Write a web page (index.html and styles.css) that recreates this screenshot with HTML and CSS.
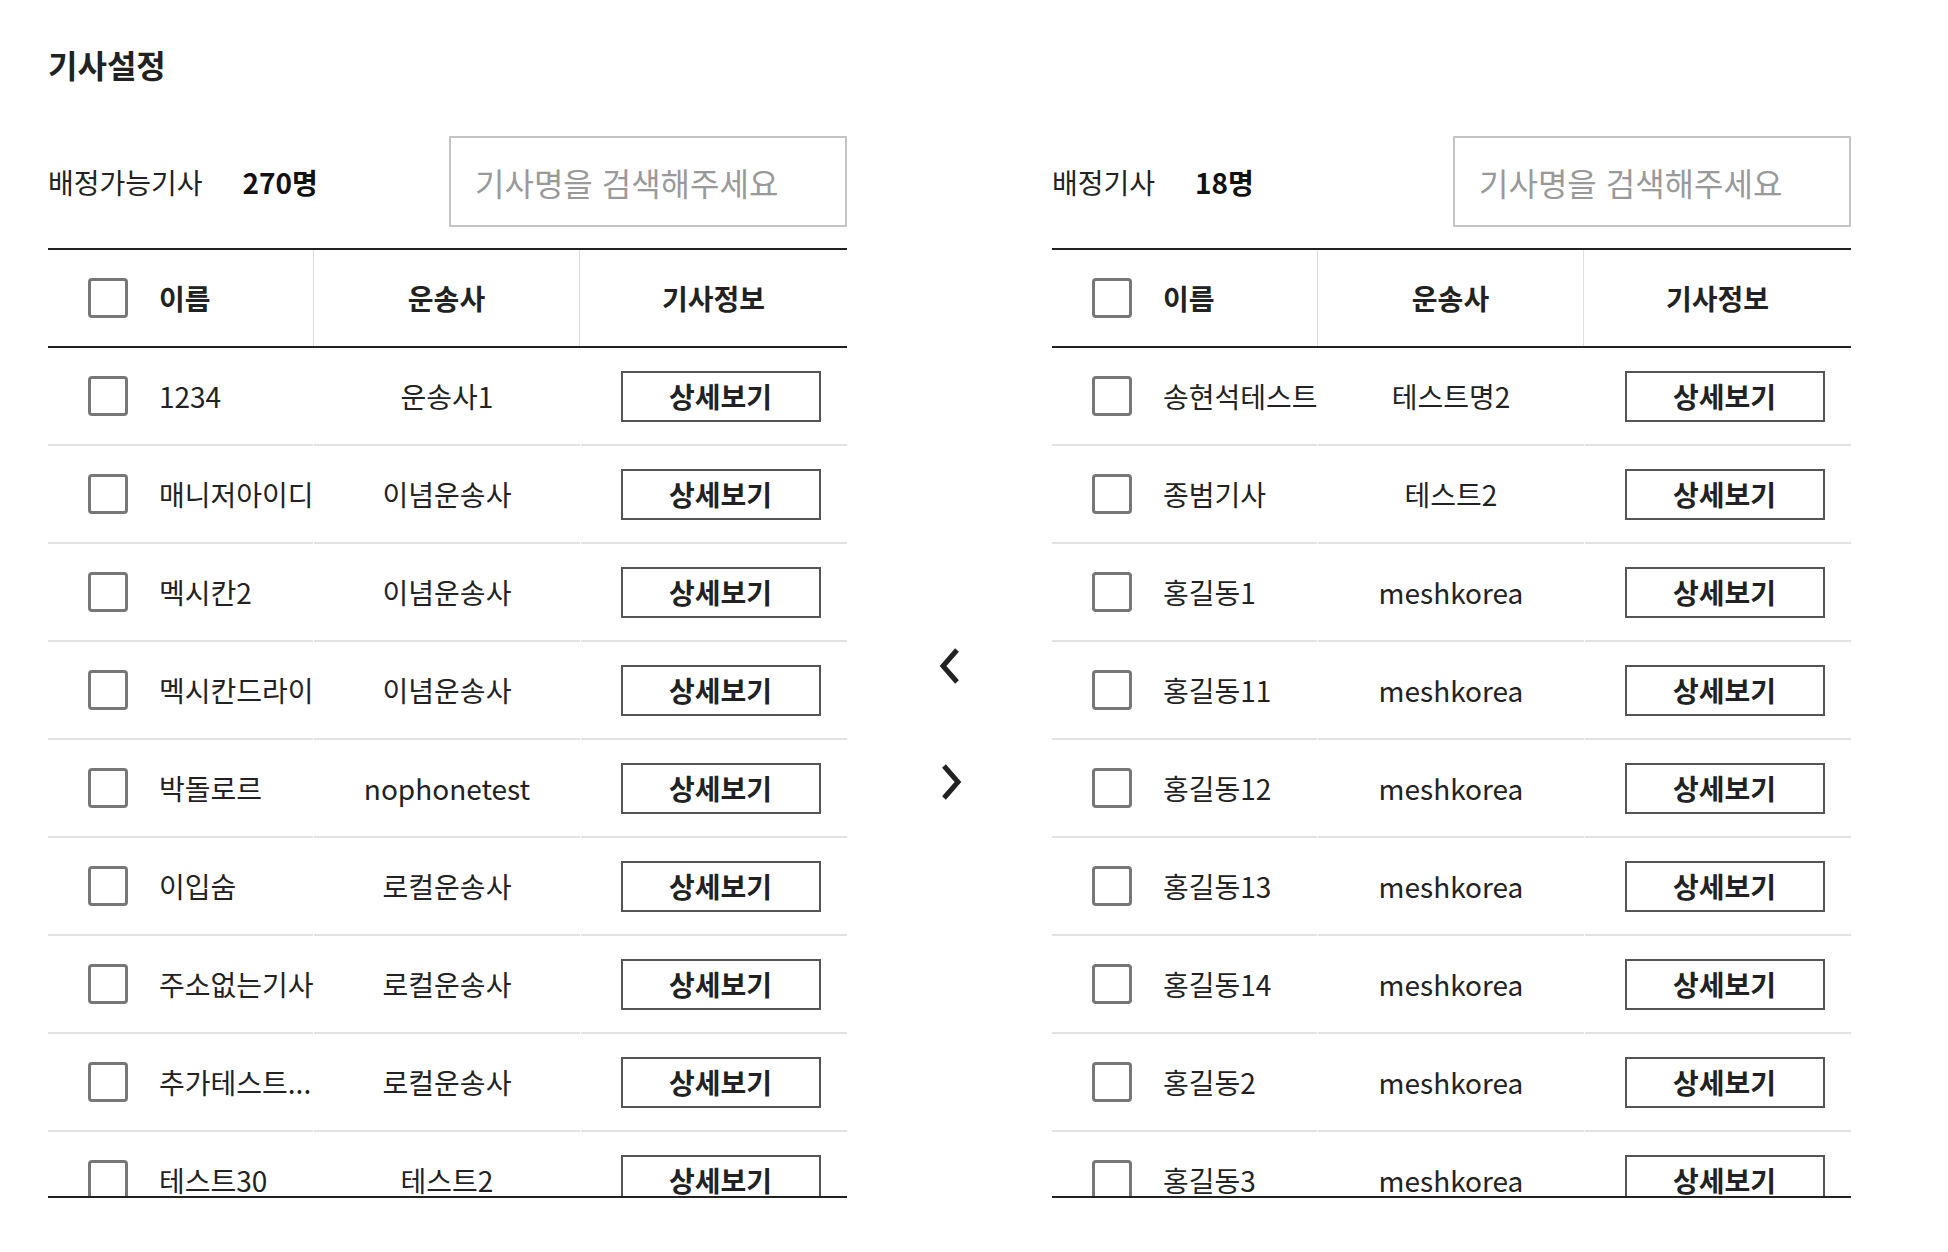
FILE: index.html
```html
<!DOCTYPE html>
<html lang="ko">

<head>
    <meta charset="UTF-8">
    <meta name="viewport" content="width=device-width, initial-scale=1.0">
    <title>기사설정</title>
    <link rel="stylesheet" href="styles.css">
</head>

<body>
    <div class="page">
        <h1 class="page-title">기사설정</h1>

        <div class="panels">
            <!-- 배정가능기사 -->
            <section class="panel">
                <div class="panel-head">
                    <span class="panel-label">배정가능기사</span>
                    <span class="panel-count">270명</span>
                    <input class="search" type="text" placeholder="기사명을 검색해주세요">
                </div>

                <div class="grid">
                    <div class="grid-head">
                        <div class="cell cell-name"><input type="checkbox" class="check"><span>이름</span></div>
                        <div class="cell cell-center">운송사</div>
                        <div class="cell cell-center">기사정보</div>
                    </div>
                    <div class="grid-body">
                        <div class="grid-row">
                            <div class="cell cell-name"><input type="checkbox" class="check"><span class="name">1234</span></div>
                            <div class="cell cell-center">운송사1</div>
                            <div class="cell cell-btn"><button class="btn-detail">상세보기</button></div>
                        </div>
                        <div class="grid-row">
                            <div class="cell cell-name"><input type="checkbox" class="check"><span class="name">매니저아이디</span></div>
                            <div class="cell cell-center">이념운송사</div>
                            <div class="cell cell-btn"><button class="btn-detail">상세보기</button></div>
                        </div>
                        <div class="grid-row">
                            <div class="cell cell-name"><input type="checkbox" class="check"><span class="name">멕시칸2</span></div>
                            <div class="cell cell-center">이념운송사</div>
                            <div class="cell cell-btn"><button class="btn-detail">상세보기</button></div>
                        </div>
                        <div class="grid-row">
                            <div class="cell cell-name"><input type="checkbox" class="check"><span class="name">멕시칸드라이</span></div>
                            <div class="cell cell-center">이념운송사</div>
                            <div class="cell cell-btn"><button class="btn-detail">상세보기</button></div>
                        </div>
                        <div class="grid-row">
                            <div class="cell cell-name"><input type="checkbox" class="check"><span class="name">박돌로르</span></div>
                            <div class="cell cell-center">nophonetest</div>
                            <div class="cell cell-btn"><button class="btn-detail">상세보기</button></div>
                        </div>
                        <div class="grid-row">
                            <div class="cell cell-name"><input type="checkbox" class="check"><span class="name">이입숨</span></div>
                            <div class="cell cell-center">로컬운송사</div>
                            <div class="cell cell-btn"><button class="btn-detail">상세보기</button></div>
                        </div>
                        <div class="grid-row">
                            <div class="cell cell-name"><input type="checkbox" class="check"><span class="name">주소없는기사</span></div>
                            <div class="cell cell-center">로컬운송사</div>
                            <div class="cell cell-btn"><button class="btn-detail">상세보기</button></div>
                        </div>
                        <div class="grid-row">
                            <div class="cell cell-name"><input type="checkbox" class="check"><span class="name">추가테스트...</span></div>
                            <div class="cell cell-center">로컬운송사</div>
                            <div class="cell cell-btn"><button class="btn-detail">상세보기</button></div>
                        </div>
                        <div class="grid-row">
                            <div class="cell cell-name"><input type="checkbox" class="check"><span class="name">테스트30</span></div>
                            <div class="cell cell-center">테스트2</div>
                            <div class="cell cell-btn"><button class="btn-detail">상세보기</button></div>
                        </div>
                        <div class="grid-row">
                            <div class="cell cell-name"><input type="checkbox" class="check"><span class="name">테스트31</span></div>
                            <div class="cell cell-center">테스트2</div>
                            <div class="cell cell-btn"><button class="btn-detail">상세보기</button></div>
                        </div>
                    </div>
                </div>
            </section>

            <!-- 이동 버튼 -->
            <div class="move">
                <button class="move-btn" aria-label="배정기사에서 빼기">
                    <svg width="24" height="40" viewBox="0 0 24 40"><path d="M19 4 L5 20 L19 36" fill="none" stroke="#222" stroke-width="5"/></svg>
                </button>
                <button class="move-btn" aria-label="배정기사로 추가">
                    <svg width="24" height="40" viewBox="0 0 24 40"><path d="M6 4 L20 20 L6 36" fill="none" stroke="#222" stroke-width="5"/></svg>
                </button>
            </div>

            <!-- 배정기사 -->
            <section class="panel">
                <div class="panel-head">
                    <span class="panel-label">배정기사</span>
                    <span class="panel-count">18명</span>
                    <input class="search" type="text" placeholder="기사명을 검색해주세요">
                </div>

                <div class="grid">
                    <div class="grid-head">
                        <div class="cell cell-name"><input type="checkbox" class="check"><span>이름</span></div>
                        <div class="cell cell-center">운송사</div>
                        <div class="cell cell-center">기사정보</div>
                    </div>
                    <div class="grid-body">
                        <div class="grid-row">
                            <div class="cell cell-name"><input type="checkbox" class="check"><span class="name">송현석테스트</span></div>
                            <div class="cell cell-center">테스트명2</div>
                            <div class="cell cell-btn"><button class="btn-detail">상세보기</button></div>
                        </div>
                        <div class="grid-row">
                            <div class="cell cell-name"><input type="checkbox" class="check"><span class="name">종범기사</span></div>
                            <div class="cell cell-center">테스트2</div>
                            <div class="cell cell-btn"><button class="btn-detail">상세보기</button></div>
                        </div>
                        <div class="grid-row">
                            <div class="cell cell-name"><input type="checkbox" class="check"><span class="name">홍길동1</span></div>
                            <div class="cell cell-center">meshkorea</div>
                            <div class="cell cell-btn"><button class="btn-detail">상세보기</button></div>
                        </div>
                        <div class="grid-row">
                            <div class="cell cell-name"><input type="checkbox" class="check"><span class="name">홍길동11</span></div>
                            <div class="cell cell-center">meshkorea</div>
                            <div class="cell cell-btn"><button class="btn-detail">상세보기</button></div>
                        </div>
                        <div class="grid-row">
                            <div class="cell cell-name"><input type="checkbox" class="check"><span class="name">홍길동12</span></div>
                            <div class="cell cell-center">meshkorea</div>
                            <div class="cell cell-btn"><button class="btn-detail">상세보기</button></div>
                        </div>
                        <div class="grid-row">
                            <div class="cell cell-name"><input type="checkbox" class="check"><span class="name">홍길동13</span></div>
                            <div class="cell cell-center">meshkorea</div>
                            <div class="cell cell-btn"><button class="btn-detail">상세보기</button></div>
                        </div>
                        <div class="grid-row">
                            <div class="cell cell-name"><input type="checkbox" class="check"><span class="name">홍길동14</span></div>
                            <div class="cell cell-center">meshkorea</div>
                            <div class="cell cell-btn"><button class="btn-detail">상세보기</button></div>
                        </div>
                        <div class="grid-row">
                            <div class="cell cell-name"><input type="checkbox" class="check"><span class="name">홍길동2</span></div>
                            <div class="cell cell-center">meshkorea</div>
                            <div class="cell cell-btn"><button class="btn-detail">상세보기</button></div>
                        </div>
                        <div class="grid-row">
                            <div class="cell cell-name"><input type="checkbox" class="check"><span class="name">홍길동3</span></div>
                            <div class="cell cell-center">meshkorea</div>
                            <div class="cell cell-btn"><button class="btn-detail">상세보기</button></div>
                        </div>
                        <div class="grid-row">
                            <div class="cell cell-name"><input type="checkbox" class="check"><span class="name">홍길동4</span></div>
                            <div class="cell cell-center">meshkorea</div>
                            <div class="cell cell-btn"><button class="btn-detail">상세보기</button></div>
                        </div>
                    </div>
                </div>
            </section>
        </div>
    </div>
</body>
</html>
```

FILE: styles.css
```css
body {
    margin: 0;
    padding: 0;
    background: #fff;
    color: #222;
    font-family: "Noto Sans CJK KR", "Noto Sans", sans-serif;
}

.page {
    padding: 48px 48px 0;
}

.page-title {
    margin: 0;
    font-size: 32px;
    line-height: 1;
    font-weight: bold;
    color: #222;
}

.panels {
    display: flex;
    margin-top: 56px;
}

.panel {
    width: 799px;
}

.panel-head {
    display: flex;
    align-items: center;
    height: 91px;
    margin-bottom: 21px;
}

.panel-label {
    font-size: 28px;
    color: #222;
}

.panel-count {
    margin-left: 40px;
    font-size: 28px;
    font-weight: bold;
    color: #111;
}

.search {
    margin-left: auto;
    width: 398px;
    height: 91px;
    box-sizing: border-box;
    border: 2px solid #c4c4c4;
    padding: 0 24px;
    font-family: inherit;
    font-size: 32px;
    color: #222;
    outline: none;
}

.search::placeholder {
    color: #999;
}

/* 목록 */
.grid {
    border-top: 2px solid #222;
    border-bottom: 2px solid #222;
}

.grid-head,
.grid-row {
    display: grid;
    grid-template-columns: 265px 266px 1fr;
}

.grid-head {
    height: 96px;
    border-bottom: 2px solid #222;
    font-weight: bold;
}

.grid-head .cell + .cell {
    border-left: 1px solid #ddd;
}

.grid-body {
    height: 848px;
    overflow-y: auto;
    scrollbar-width: none;
}

.grid-row {
    height: 98px;
    column-gap: 1px;
}

.grid-row .cell {
    border-bottom: 2px solid #e2e2e2;
}

.cell {
    display: flex;
    align-items: center;
    font-size: 28px;
    min-width: 0;
}

.cell-name {
    padding-left: 40px;
}

.cell-center {
    justify-content: center;
}

.cell-btn {
    justify-content: center;
    padding-left: 13px;
}

.name {
    white-space: nowrap;
}

.check {
    appearance: none;
    -webkit-appearance: none;
    width: 40px;
    height: 40px;
    margin: 0 31px 0 0;
    flex-shrink: 0;
    border: 3px solid #777;
    border-radius: 4px;
    background: #fff;
}

.btn-detail {
    width: 200px;
    height: 51px;
    background: #fff;
    border: 2px solid #555;
    font-family: inherit;
    font-size: 28px;
    font-weight: bold;
    color: #222;
    padding: 0;
}

/* 이동 버튼 */
.move {
    width: 205px;
    padding-top: 114px;
    display: flex;
    flex-direction: column;
    align-items: center;
    justify-content: center;
    gap: 76px;
}

.move-btn {
    border: 0;
    background: none;
    padding: 0;
    line-height: 0;
}
```
